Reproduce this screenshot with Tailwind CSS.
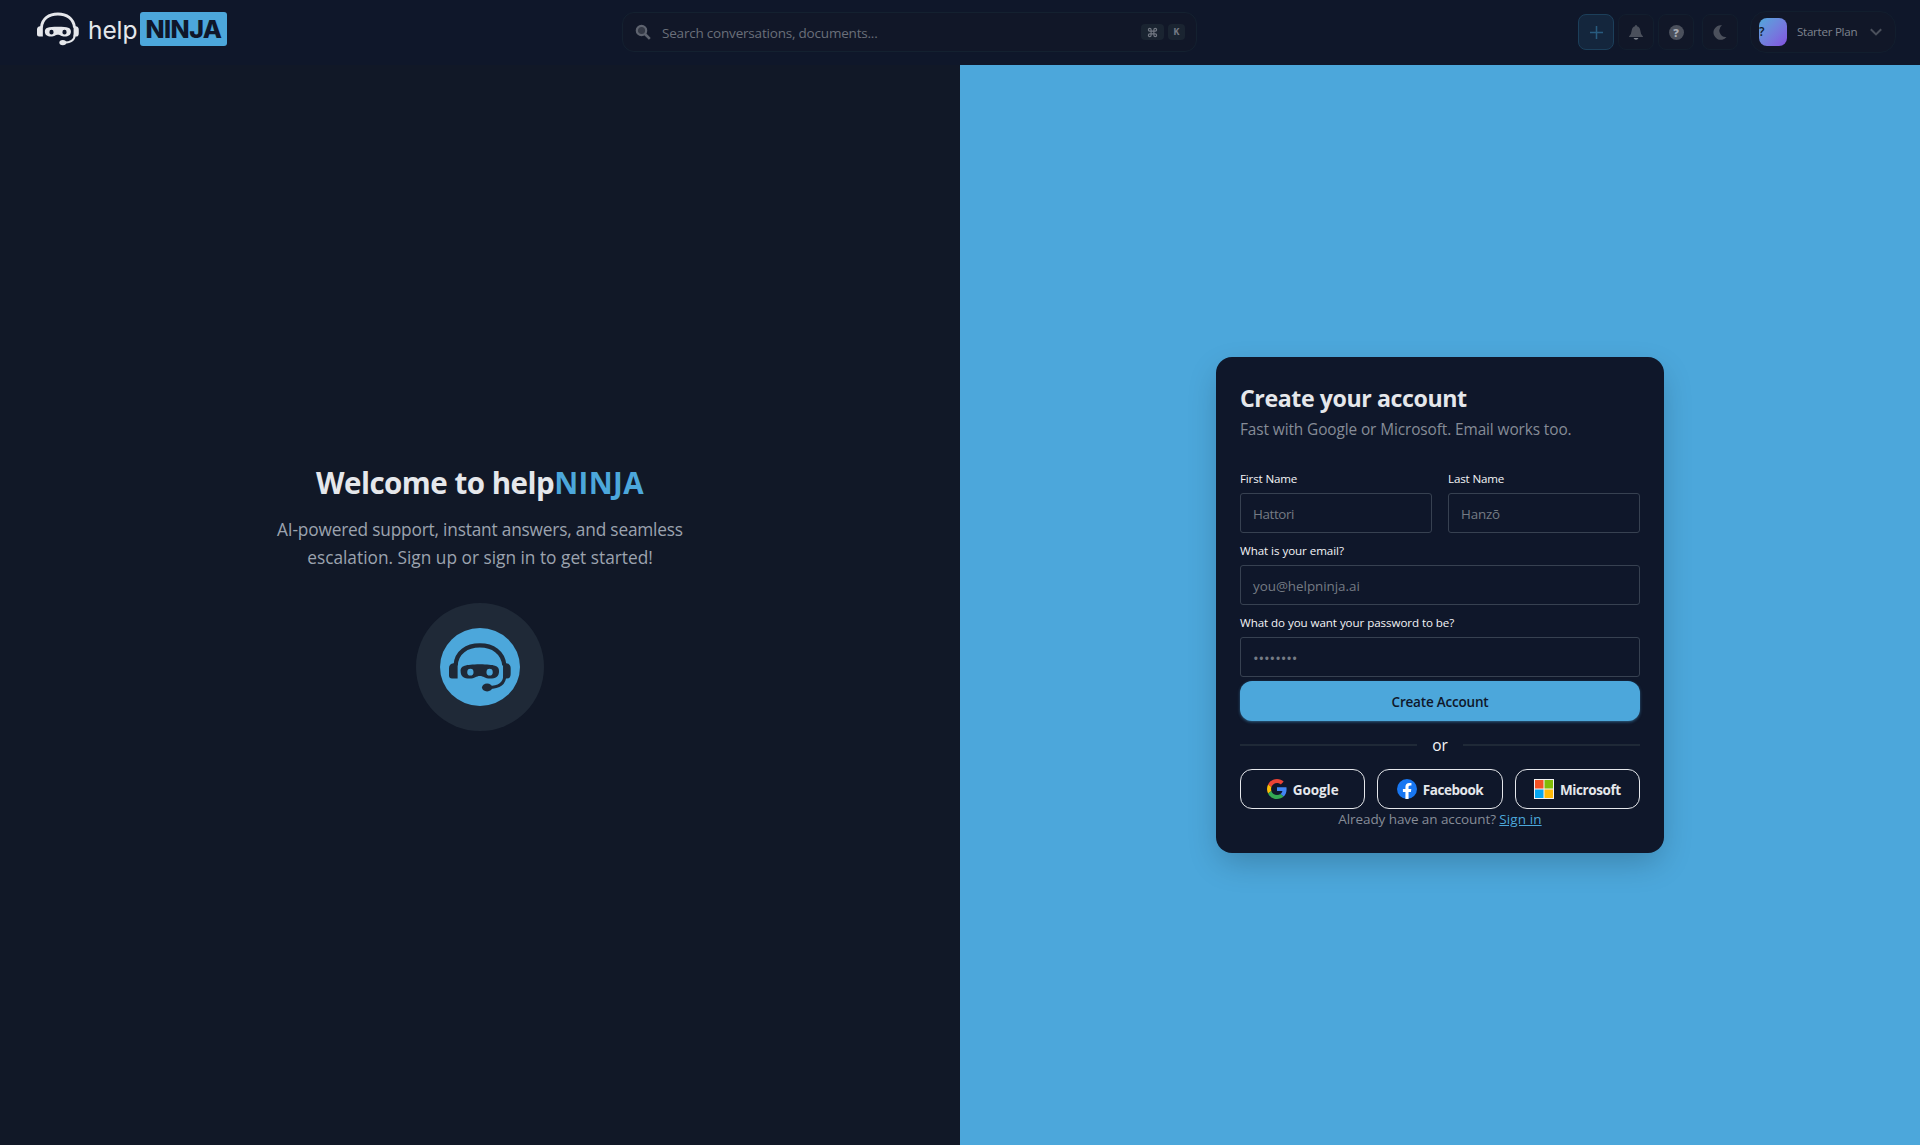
<!DOCTYPE html>
<html lang="en">
<head>
<meta charset="utf-8">
<title>helpNINJA</title>
<script src="https://cdn.jsdelivr.net/npm/@tailwindcss/browser@4"></script>
</head>
<body class="h-[1145px] flex flex-col overflow-hidden bg-[#111827] font-['Open_Sans','Noto_Sans',sans-serif] text-gray-200">
<svg width="0" height="0" class="hidden">
  <symbol id="ninja" viewBox="148 157 187 147">
    <path d="M168 224C170 184 202 164 241 164S311 184 315 224" fill="none" stroke="currentColor" stroke-width="13"/>
    <path d="M174 264h-17q-9 0-9-9v-22q0-14 14-15h12zM311 218h9q14 1 14 15v16q0 15-12 15h-11z" fill="currentColor"/>
    <path d="M316 255C316 280 298 291 268 291" fill="none" stroke="currentColor" stroke-width="9"/>
    <ellipse cx="263" cy="291" rx="15.500" ry="12" fill="currentColor"/>
    <path fill-rule="evenodd" d="M183 242C183 225 196 222 241 221C286 222 299 225 299 242C299 258 288 264 272 264C256 264 252 256 241 256C230 256 226 264 210 264C194 264 183 258 183 242ZM203 244.500a9.500 10.500 0 1 0 19 0a9.500 10.500 0 1 0-19 0ZM261 244.500a9.500 10.500 0 1 0 19 0a9.500 10.500 0 1 0-19 0Z" fill="currentColor"/>
  </symbol>
</svg>

<header class="h-[65px] shrink-0 flex items-start bg-[#0f172a]">
  <div class="w-[622px] flex items-start pl-[37px] pt-3 font-['Inter',sans-serif] text-[25px] leading-[34px]">
    <svg class="w-[42px] h-[34px]"><use href="#ninja"/></svg>
    <span class="ml-[9px] w-[52px] pt-px text-[24.5px] tracking-[-0.1px]">help</span>
    <span class="w-[87px] h-[34px] rounded-[3px] bg-[#4ca7db] text-center font-extrabold tracking-[-0.6px] text-[#0f172a]">NINJA</span>
  </div>
  <div class="mt-3 w-[575px] h-10 flex items-center rounded-xl border border-[#142130] bg-[#111728] pl-3 pr-[11px]">
    <svg class="w-4 h-4 text-[#5e636f] -mt-px" viewBox="0 0 16 16" fill="none" stroke="currentColor"><circle cx="6.500" cy="6.500" r="4.700" stroke-width="2.200" fill="#343946"/><path d="M10 10l4.800 4.800" stroke-width="2.600"/></svg>
    <span class="ml-[11px] pt-0.5 text-[13.5px] leading-5 tracking-[-0.2px] text-[#6a6f7a]">Search conversations, documents...</span>
    <span class="ml-auto flex gap-1">
      <kbd class="w-[23px] h-4 rounded bg-[#1a2431] flex items-center justify-center text-[#727883]"><svg class="w-[11px] h-[11px]" viewBox="0 0 24 24" fill="none" stroke="currentColor" stroke-width="2.500"><path d="M15 6v12a3 3 0 1 0 3-3H6a3 3 0 1 0 3 3V6a3 3 0 1 0-3 3h12a3 3 0 1 0-3-3"/></svg></kbd>
      <kbd class="w-[17px] h-4 rounded bg-[#1a2431] flex items-center justify-center text-[10px] font-bold text-[#727883]">K</kbd>
    </span>
  </div>
  <div class="ml-[381px] mt-3.5 flex gap-1">
    <span class="w-9 h-9 rounded-lg border border-[#1c3f5a] bg-[#14263d] flex items-center justify-center"><svg class="w-[13px] h-[13px] text-[#285b7f]" viewBox="0 0 13 13" stroke="currentColor" stroke-width="1.500"><path d="M6.500 0v13M0 6.500h13"/></svg></span>
    <span class="w-9 h-9 rounded-lg border border-[#121e2e] bg-[#111728] flex items-center justify-center"><svg class="w-[14px] h-[15px]" viewBox="0 0 14 15"><path d="M7 0q1 0 1 1.200Q11 2 11.300 5.500 11.500 9 14 11.500V12H0v-.5Q2.500 9 2.700 5.500 3 2 6 1.200 6 0 7 0z" fill="#4b505c"/><path d="M4.500 13h5q-.8 1.800-2.500 1.800T4.500 13z" fill="#7f848e"/></svg></span>
    <span class="w-9 h-9 rounded-lg border border-[#121e2e] bg-[#111728] flex items-center justify-center"><span class="w-[15px] h-[15px] rounded-full bg-[#4b505c] flex items-center justify-center text-[11px] leading-none font-extrabold text-[#a9adb5]">?</span></span>
    <span class="ml-1 w-9 h-9 rounded-lg border border-[#121e2e] bg-[#111728] flex items-center justify-center"><svg class="w-[14px] h-[15px]" viewBox="0 0 14 15"><path d="M9 .3A7.300 7.300 0 1 0 13.500 12 6.500 6.500 0 0 1 9 .3z" fill="#4b505c"/></svg></span>
  </div>
  <div class="ml-3 mt-[11px] w-[146px] h-[42px] flex items-center rounded-2xl border border-[#121e2e] bg-[#111728] pl-2">
    <span class="w-7 h-7 rounded-lg bg-linear-to-br from-[#4ca7db] to-[#8250de] flex items-center text-xs font-semibold text-[#0f172a]">?</span>
    <span class="ml-[10px] text-[11.6px] tracking-[-0.27px] font-medium text-[#7f848f]">Starter Plan</span>
    <svg class="ml-auto mr-[13px] w-3 h-2 text-[#4b505c]" viewBox="0 0 12 8" fill="none" stroke="currentColor" stroke-width="2"><path d="M.8 1.200L6 6.400l5.200-5.200"/></svg>
  </div>
</header>

<main class="flex-1 grid grid-cols-2">
  <section class="flex flex-col items-center pt-[400px]">
    <h1 class="text-[29.5px] leading-9 font-bold tracking-[-0.5px]">Welcome to help<span class="text-[#4ca7db] tracking-[0.4px]">NINJA</span></h1>
    <p class="mt-[15px] text-[17.3px] leading-7 tracking-[-0.19px] text-center text-[#9ca3af]">AI-powered support, instant answers, and seamless<br><span class="tracking-normal">escalation. Sign up or sign in to get started!</span></p>
    <div class="mt-[31px] w-32 h-32 rounded-full bg-[#1f2937] flex items-center justify-center">
      <div class="w-20 h-[78px] rounded-[50%] bg-[#4ca7db] text-[#1f2937] flex items-center justify-center"><svg class="w-[62px] h-[49px]"><use href="#ninja"/></svg></div>
    </div>
  </section>
  <section class="bg-[#4ca7db] flex justify-center items-start pt-[292px]">
    <div class="w-[448px] h-[496px] rounded-2xl bg-[#0f172a] px-6 pt-[23px] shadow-[0_12px_32px_-4px_rgba(0,0,0,0.22)] flex flex-col">
      <h2 class="text-[23.2px] leading-9 font-bold tracking-[-0.43px]">Create your account</h2>
      <p class="mt-0.5 text-[15.4px] leading-6 tracking-[-0.1px] text-[#868c97]">Fast with Google or Microsoft. Email works too.</p>
      <div class="mt-[29px] grid grid-cols-2 gap-4">
        <div><label class="block h-[22px] text-[11.6px] tracking-[-0.15px] font-medium leading-4 text-gray-100">First Name</label><div class="h-10 rounded-[3px] border border-[#374151] px-3 text-[13.4px] tracking-[-0.4px] leading-10 text-[#757b84]">Hattori</div></div>
        <div><label class="block h-[22px] text-[11.6px] tracking-[-0.15px] font-medium leading-4 text-gray-100">Last Name</label><div class="h-10 rounded-[3px] border border-[#374151] px-3 text-[13.4px] tracking-[-0.2px] leading-10 text-[#757b84]">Hanzō</div></div>
      </div>
      <label class="block mt-2.5 h-[22px] text-[11.6px] tracking-[-0.06px] font-medium leading-4 text-gray-100">What is your email?</label>
      <div class="h-10 rounded-[3px] border border-[#374151] px-3 text-[13.4px] tracking-[-0.03px] leading-10 text-[#757b84]">you@helpninja.ai</div>
      <label class="block mt-2.5 h-[22px] text-[11.6px] tracking-[-0.07px] font-medium leading-4 text-gray-100">What do you want your password to be?</label>
      <div class="h-10 rounded-[3px] border border-[#374151] px-3 text-[15px] tracking-[-0.1px] leading-[41px] text-[#757b84]">••••••••</div>
      <div class="mt-1 h-10 rounded-xl bg-[#4ca7db] text-center text-[13.5px] tracking-[-0.2px] leading-[42px] font-semibold text-[#0f172a] shadow-[0_1px_3px_#4ca7db80]">Create Account</div>
      <div class="mt-3 h-6 flex items-center text-[15.5px] text-gray-100"><span class="h-0.5 flex-1 bg-[#1f2937]"></span><span class="w-[46px] text-center pt-px">or</span><span class="h-0.5 flex-1 bg-[#1f2937]"></span></div>
      <div class="mt-3 grid grid-cols-3 gap-3 text-[13.5px] tracking-[-0.3px] font-bold">
        <span class="h-10 rounded-xl border border-gray-200 flex items-center justify-center gap-1.5"><svg class="w-5 h-5" viewBox="0 0 48 48"><path fill="#EA4335" d="M24 9.500c3.540 0 6.710 1.220 9.210 3.600l6.850-6.850C35.900 2.380 30.470 0 24 0 14.620 0 6.510 5.380 2.560 13.220l7.980 6.190C12.430 13.720 17.740 9.500 24 9.500z"/><path fill="#4285F4" d="M46.980 24.550c0-1.570-.15-3.090-.38-4.550H24v9.020h12.940c-.58 2.960-2.260 5.480-4.780 7.180l7.730 6c4.510-4.180 7.090-10.360 7.090-17.650z"/><path fill="#FBBC05" d="M10.530 28.590c-.48-1.450-.76-2.990-.76-4.590s.27-3.140.76-4.590l-7.980-6.190C.92 16.460 0 20.120 0 24c0 3.880.92 7.540 2.560 10.780l7.970-6.190z"/><path fill="#34A853" d="M24 48c6.480 0 11.930-2.130 15.890-5.810l-7.730-6c-2.150 1.450-4.920 2.300-8.160 2.300-6.260 0-11.570-4.220-13.470-9.910l-7.980 6.190C6.510 42.620 14.620 48 24 48z"/></svg><span class="pt-0.5 tracking-[-0.05px]">Google</span></span>
        <span class="h-10 rounded-xl border border-gray-200 flex items-center justify-center gap-1.5"><svg class="w-5 h-5" viewBox="0 0 24 24"><circle cx="12" cy="12" r="12" fill="#1877F2"/><path fill="#fff" d="M16.670 15.470l.53-3.470h-3.330V9.750c0-.95.460-1.870 1.960-1.870h1.510V4.920s-1.370-.23-2.690-.23c-2.740 0-4.530 1.660-4.530 4.670V12H7.080v3.470h3.040v8.380a12.100 12.100 0 0 0 3.750 0v-8.380z"/></svg><span class="pt-0.5 tracking-[-0.45px]">Facebook</span></span>
        <span class="h-10 rounded-xl border border-gray-200 flex items-center justify-center gap-1.5"><svg class="w-5 h-5" viewBox="0 0 20 20"><path fill="#f3f3f3" d="M0 0h20v20H0z"/><path fill="#f35325" d="M1 1h8.500v8.500H1z"/><path fill="#81bc06" d="M10.500 1H19v8.500h-8.500z"/><path fill="#05a6f0" d="M1 10.500h8.500V19H1z"/><path fill="#ffba08" d="M10.500 10.500H19V19h-8.500z"/></svg><span class="pt-0.5 tracking-[-0.4px]">Microsoft</span></span>
      </div>
      <p class="text-center text-[13.5px] tracking-[-0.09px] leading-[21px] text-[#868c97]">Already have an account? <a class="text-[#4ca7db] underline tracking-[0.1px]">Sign in</a></p>
    </div>
  </section>
</main>
</body>
</html>
